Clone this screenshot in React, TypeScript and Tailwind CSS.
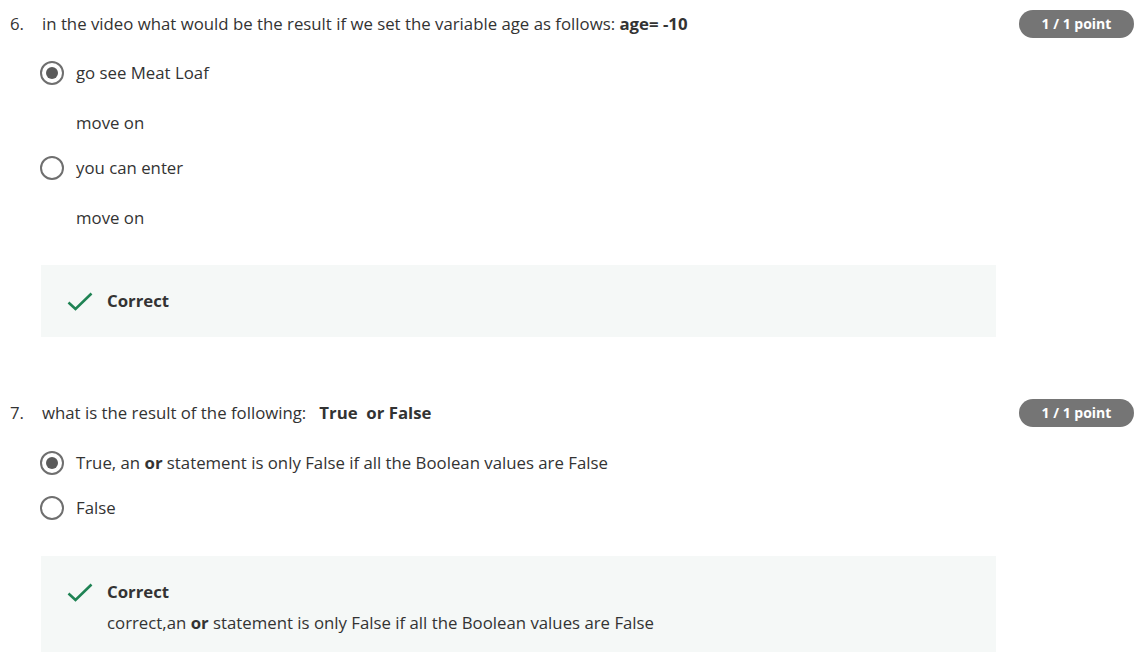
import type { ReactNode } from 'react'

const font = { fontFamily: '"Open Sans", "Liberation Sans", sans-serif' }

function Radio({ checked }: { checked?: boolean }) {
  return (
    <span className="flex h-6 w-6 shrink-0 items-center justify-center rounded-full border-2 border-[#6f6f6f] bg-white">
      {checked && <span className="h-3 w-3 rounded-full bg-[#5b5b5b]" />}
    </span>
  )
}

function Badge() {
  return (
    <span className="flex h-7 w-[115px] shrink-0 items-center justify-center rounded-full bg-[#757575] text-sm font-bold text-white">
      1 / 1 point
    </span>
  )
}

function Check() {
  return (
    <svg width="26" height="19" viewBox="0 0 26 19" className="shrink-0">
      <path d="M1.5 10.5 L8.5 17 L24.5 1.5" fill="none" stroke="#1f8354" strokeWidth="2.6" />
    </svg>
  )
}

function Option({ checked, children, note }: { checked?: boolean; children: ReactNode; note?: string }) {
  return (
    <div className="flex flex-col">
      <div className="flex h-6 items-center gap-3">
        <Radio checked={checked} />
        <span>{children}</span>
      </div>
      {note && <div className="mt-[26px] pl-9 leading-6">{note}</div>}
    </div>
  )
}

function Question({
  num,
  title,
  children,
}: {
  num: string
  title: ReactNode
  children: ReactNode
}) {
  return (
    <div className="flex flex-col">
      <div className="flex h-7 items-center justify-between pr-[7px]">
        <div className="flex">
          <span className="w-[42px] shrink-0 pl-[10px]">{num}</span>
          <span>{title}</span>
        </div>
        <Badge />
      </div>
      <div className="pl-10">{children}</div>
    </div>
  )
}

export default function App() {
  return (
    <div className="min-h-[663px] bg-white pt-[10px] text-[16.8px] text-[#333333]" style={font}>
      <Question
        num="6."
        title={
          <>
            in the video what would be the result if we set the variable age as follows: <b>age= -10</b>
          </>
        }
      >
        <div className="mt-[23px] flex flex-col gap-[21px]">
          <Option checked note="move on">
            go see Meat Loaf
          </Option>
          <Option note="move on">you can enter</Option>
        </div>
        <div className="ml-px mr-[145px] mt-[35px] flex items-center gap-[14px] bg-[#f5f8f7] px-[26px] py-6 leading-6">
          <Check />
          <span className="font-bold">Correct</span>
        </div>
      </Question>

      <div className="mt-[62px]">
        <Question
          num="7."
          title={
            <>
              what is the result of the following:&nbsp;&nbsp; <b>True&nbsp; or False</b>
            </>
          }
        >
          <div className="mt-6 flex flex-col gap-[21px]">
            <Option checked>
              True, an <b>or</b> statement is only False if all the Boolean values are False
            </Option>
            <Option>False</Option>
          </div>
          <div className="ml-px mr-[145px] mt-9 flex flex-col bg-[#f5f8f7] pb-[17px] pl-[26px] pr-[26px] pt-6 leading-6">
            <div className="flex items-center gap-[14px]">
              <Check />
              <span className="font-bold">Correct</span>
            </div>
            <div className="mt-[7px] pl-10">
              correct,an <b>or</b> statement is only False if all the Boolean values are False
            </div>
          </div>
        </Question>
      </div>
    </div>
  )
}
